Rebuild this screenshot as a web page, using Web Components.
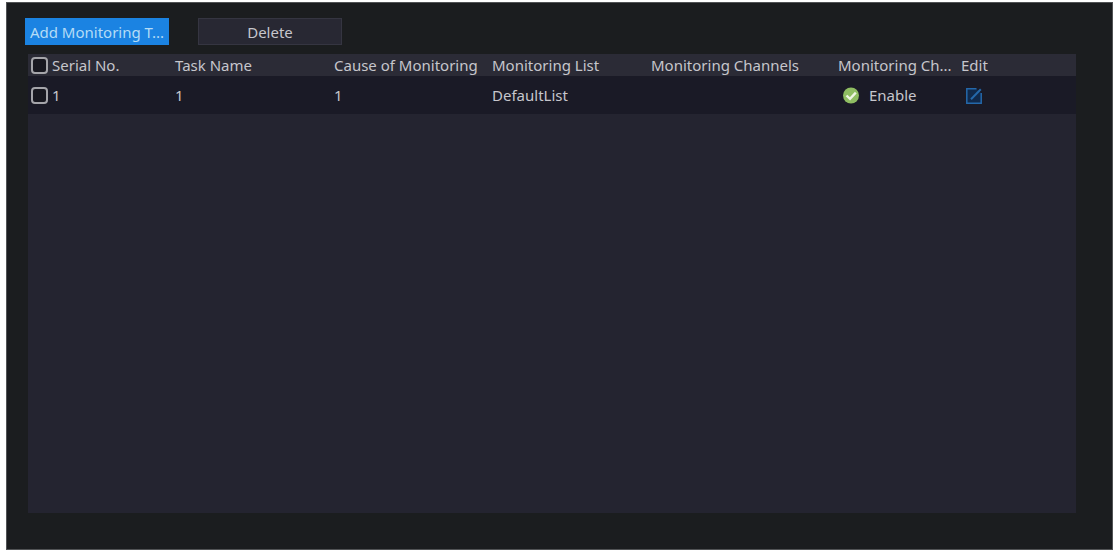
<!DOCTYPE html>
<html lang="en">
<head>
<meta charset="utf-8">
<title>Monitoring Tasks</title>
<style>
html, body { height: 100%; }
body { margin: 0; background: #fff; color: #c6c6cc; font: 15px/20px "Noto Sans", "Open Sans", sans-serif; }
</style>
</head>
<body>
<monitor-window>
  <tool-button slot="tools" kind="primary">Add Monitoring T...</tool-button>
  <tool-button slot="tools">Delete</tool-button>
  <task-table></task-table>
</monitor-window>

<template id="window-template">
  <style>
    :host { display: block; box-sizing: border-box; height: 100%; padding: 2px 1px 1px 6px; }
    .frame { display: flex; flex-direction: column; box-sizing: border-box; height: 100%; padding: 15px 36px 36px 18px; background: #1b1d1f; border: 1px solid #515355; }
    .tools { display: flex; gap: 29px; padding-bottom: 9px; }
    .content { display: flex; flex: 1; padding-left: 3px; }
  </style>
  <main class="frame">
    <div class="tools"><slot name="tools"></slot></div>
    <div class="content"><slot></slot></div>
  </main>
</template>

<template id="button-template">
  <style>
    :host { display: block; }
    button { display: block; box-sizing: border-box; width: 144px; height: 27px; padding: 0; border: 1px solid #353541; background: #282833; color: #c6c6cc; font: inherit; line-height: 24px; white-space: nowrap; }
    :host([kind="primary"]) button { background: #1b83e2; border-color: #1b83e2; color: #b4dcf6; }
  </style>
  <button type="button"><slot></slot></button>
</template>

<template id="check-template">
  <style>
    :host { display: block; }
    label { display: flex; align-items: center; gap: 4px; }
    input { appearance: none; flex: none; box-sizing: border-box; width: 17px; height: 17px; margin: 0; border: 2px solid #a5a5aa; border-radius: 4px; background: #181820; }
    input:checked { background: #1b83e2; }
  </style>
  <label><input type="checkbox"><span><slot></slot></span></label>
</template>

<template id="table-template">
  <style>
    :host { display: flex; flex-direction: column; flex: 1; min-width: 0; background: #242430; }
    table { width: 100%; table-layout: fixed; border-collapse: collapse; }
    th, td { padding: 0; text-align: left; font-weight: 400; white-space: nowrap; }
    th { height: 22px; background: #2b2b36; }
    td { height: 38px; background: #1a1a26; }
    th:first-child, td:first-child { padding-left: 3px; }
    .c1 { width: 147px; } .c2 { width: 159px; } .c3 { width: 158px; }
    .c4 { width: 159px; } .c5 { width: 187px; } .c6 { width: 123px; }
    .status { display: flex; align-items: center; gap: 10px; padding-left: 5px; }
    .edit { display: block; width: 18px; height: 20px; margin-left: 4px; padding: 2px 0 0; border: 0; background: none; }
    svg { display: block; }
  </style>
  <table>
    <colgroup><col class="c1"><col class="c2"><col class="c3"><col class="c4"><col class="c5"><col class="c6"><col></colgroup>
    <thead>
      <tr>
        <th scope="col"><check-box>Serial No.</check-box></th>
        <th scope="col">Task Name</th>
        <th scope="col">Cause of Monitoring</th>
        <th scope="col">Monitoring List</th>
        <th scope="col">Monitoring Channels</th>
        <th scope="col">Monitoring Ch...</th>
        <th scope="col">Edit</th>
      </tr>
    </thead>
    <tbody>
      <tr>
        <td><check-box>1</check-box></td>
        <td>1</td>
        <td>1</td>
        <td>DefaultList</td>
        <td></td>
        <td><div class="status">
          <svg width="16" height="18" viewBox="0 -1 16 18" aria-hidden="true"><circle cx="8" cy="8.500" r="8" fill="#8fbd62"/><path d="M3.500 8.500 7 11.800 12.800 5.700" fill="none" stroke="#eef5e2" stroke-width="2.4"/></svg>
          <span>Enable</span></div></td>
        <td><button class="edit" type="button" aria-label="Edit task 1">
          <svg width="18" height="18" viewBox="0 0 18 18" fill="none" stroke="#2468aa" stroke-width="1.5" aria-hidden="true"><path d="M11.500 1.800H1.800v14.400H16.200V6" fill="#10294b"/><path d="M6 12.200 15.800 2.200" stroke-width="2"/></svg>
        </button></td>
      </tr>
    </tbody>
  </table>
</template>

<script>
const define = (name, templateId) => customElements.define(name, class extends HTMLElement {
  constructor() {
    super();
    this.attachShadow({ mode: "open" }).append(document.getElementById(templateId).content.cloneNode(true));
  }
});
define("check-box", "check-template");
define("tool-button", "button-template");
define("task-table", "table-template");
define("monitor-window", "window-template");
</script>
</body>
</html>
